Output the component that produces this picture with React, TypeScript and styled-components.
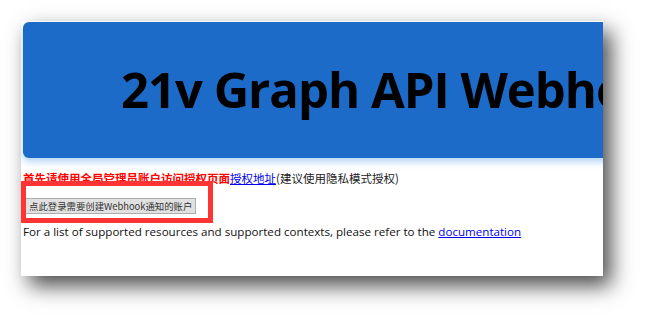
import React from "react";
import styled, { createGlobalStyle } from "styled-components";

const GlobalStyle = createGlobalStyle`
  html, body {
    margin: 0;
    padding: 0;
    background: #ffffff;
  }
  body {
    font-family: "Open Sans", "Noto Sans CJK SC", sans-serif;
  }
`;

const Stage = styled.div`
  width: 645px;
  height: 318px;
  padding: 21px 0 0 21px;
  box-sizing: border-box;
  overflow: hidden;
`;

const Card = styled.div`
  position: relative;
  width: 582px;
  height: 255px;
  box-sizing: border-box;
  padding: 1px 0 0 2px;
  background: #ffffff;
  box-shadow: 8px 10px 20px rgba(0, 0, 0, 0.7);
  overflow: hidden;
`;

const Header = styled.header`
  display: flex;
  align-items: center;
  height: 136px;
  margin-right: -40px;
  padding-left: 98px;
  background: #1c6bc8;
  border-radius: 6px 0 0 6px;
  box-shadow: 0 4px 7px rgba(70, 150, 235, 0.4);
`;

const Title = styled.h1`
  margin: 0;
  font-family: "Open Sans", sans-serif;
  font-weight: 700;
  font-size: 49px;
  letter-spacing: -1px;
  color: #000;
  white-space: nowrap;
`;

const Notice = styled.p`
  margin: 13px 0 0;
  font-family: "Noto Sans CJK SC", sans-serif;
  font-size: 11.5px;
  line-height: 15px;
  color: #222;
  white-space: nowrap;
`;

const Warn = styled.span`
  color: #ff0000;
  font-weight: 700;
`;

const Link = styled.a`
  color: #0000ee;
  text-decoration: underline;
`;

const ButtonRow = styled.div`
  margin-top: 7px;
  padding-left: 2px;
`;

const LoginButton = styled.button`
  height: 16px;
  padding: 0 3px;
  background: #e1e1e1;
  border: 1px solid #adadad;
  border-radius: 0;
  font-family: "Noto Sans CJK SC", sans-serif;
  font-size: 9.4px;
  line-height: 14px;
  color: #333;
`;

const DocLine = styled.p`
  margin: 9px 0 0;
  font-family: "Open Sans", sans-serif;
  font-size: 11.6px;
  line-height: 15px;
  color: #111;
  white-space: nowrap;
`;

const Annotation = styled.div`
  position: absolute;
  left: 0;
  top: 160px;
  width: 192px;
  height: 42px;
  box-sizing: border-box;
  border: 5px solid #ff3535;
  pointer-events: none;
`;

export default function App() {
  return (
    <>
      <GlobalStyle />
      <Stage>
        <Card>
          <Header>
            <Title>21v Graph API Webhook 通知</Title>
          </Header>
          <Notice>
            <Warn>首先请使用全局管理员账户访问授权页面</Warn>
            <Link href="#">授权地址</Link>
            (建议使用隐私模式授权)
          </Notice>
          <ButtonRow>
            <LoginButton>点此登录需要创建Webhook通知的账户</LoginButton>
          </ButtonRow>
          <DocLine>
            For a list of supported resources and supported contexts, please refer to the{" "}
            <Link href="#">documentation</Link>
          </DocLine>
          <Annotation />
        </Card>
      </Stage>
    </>
  );
}
